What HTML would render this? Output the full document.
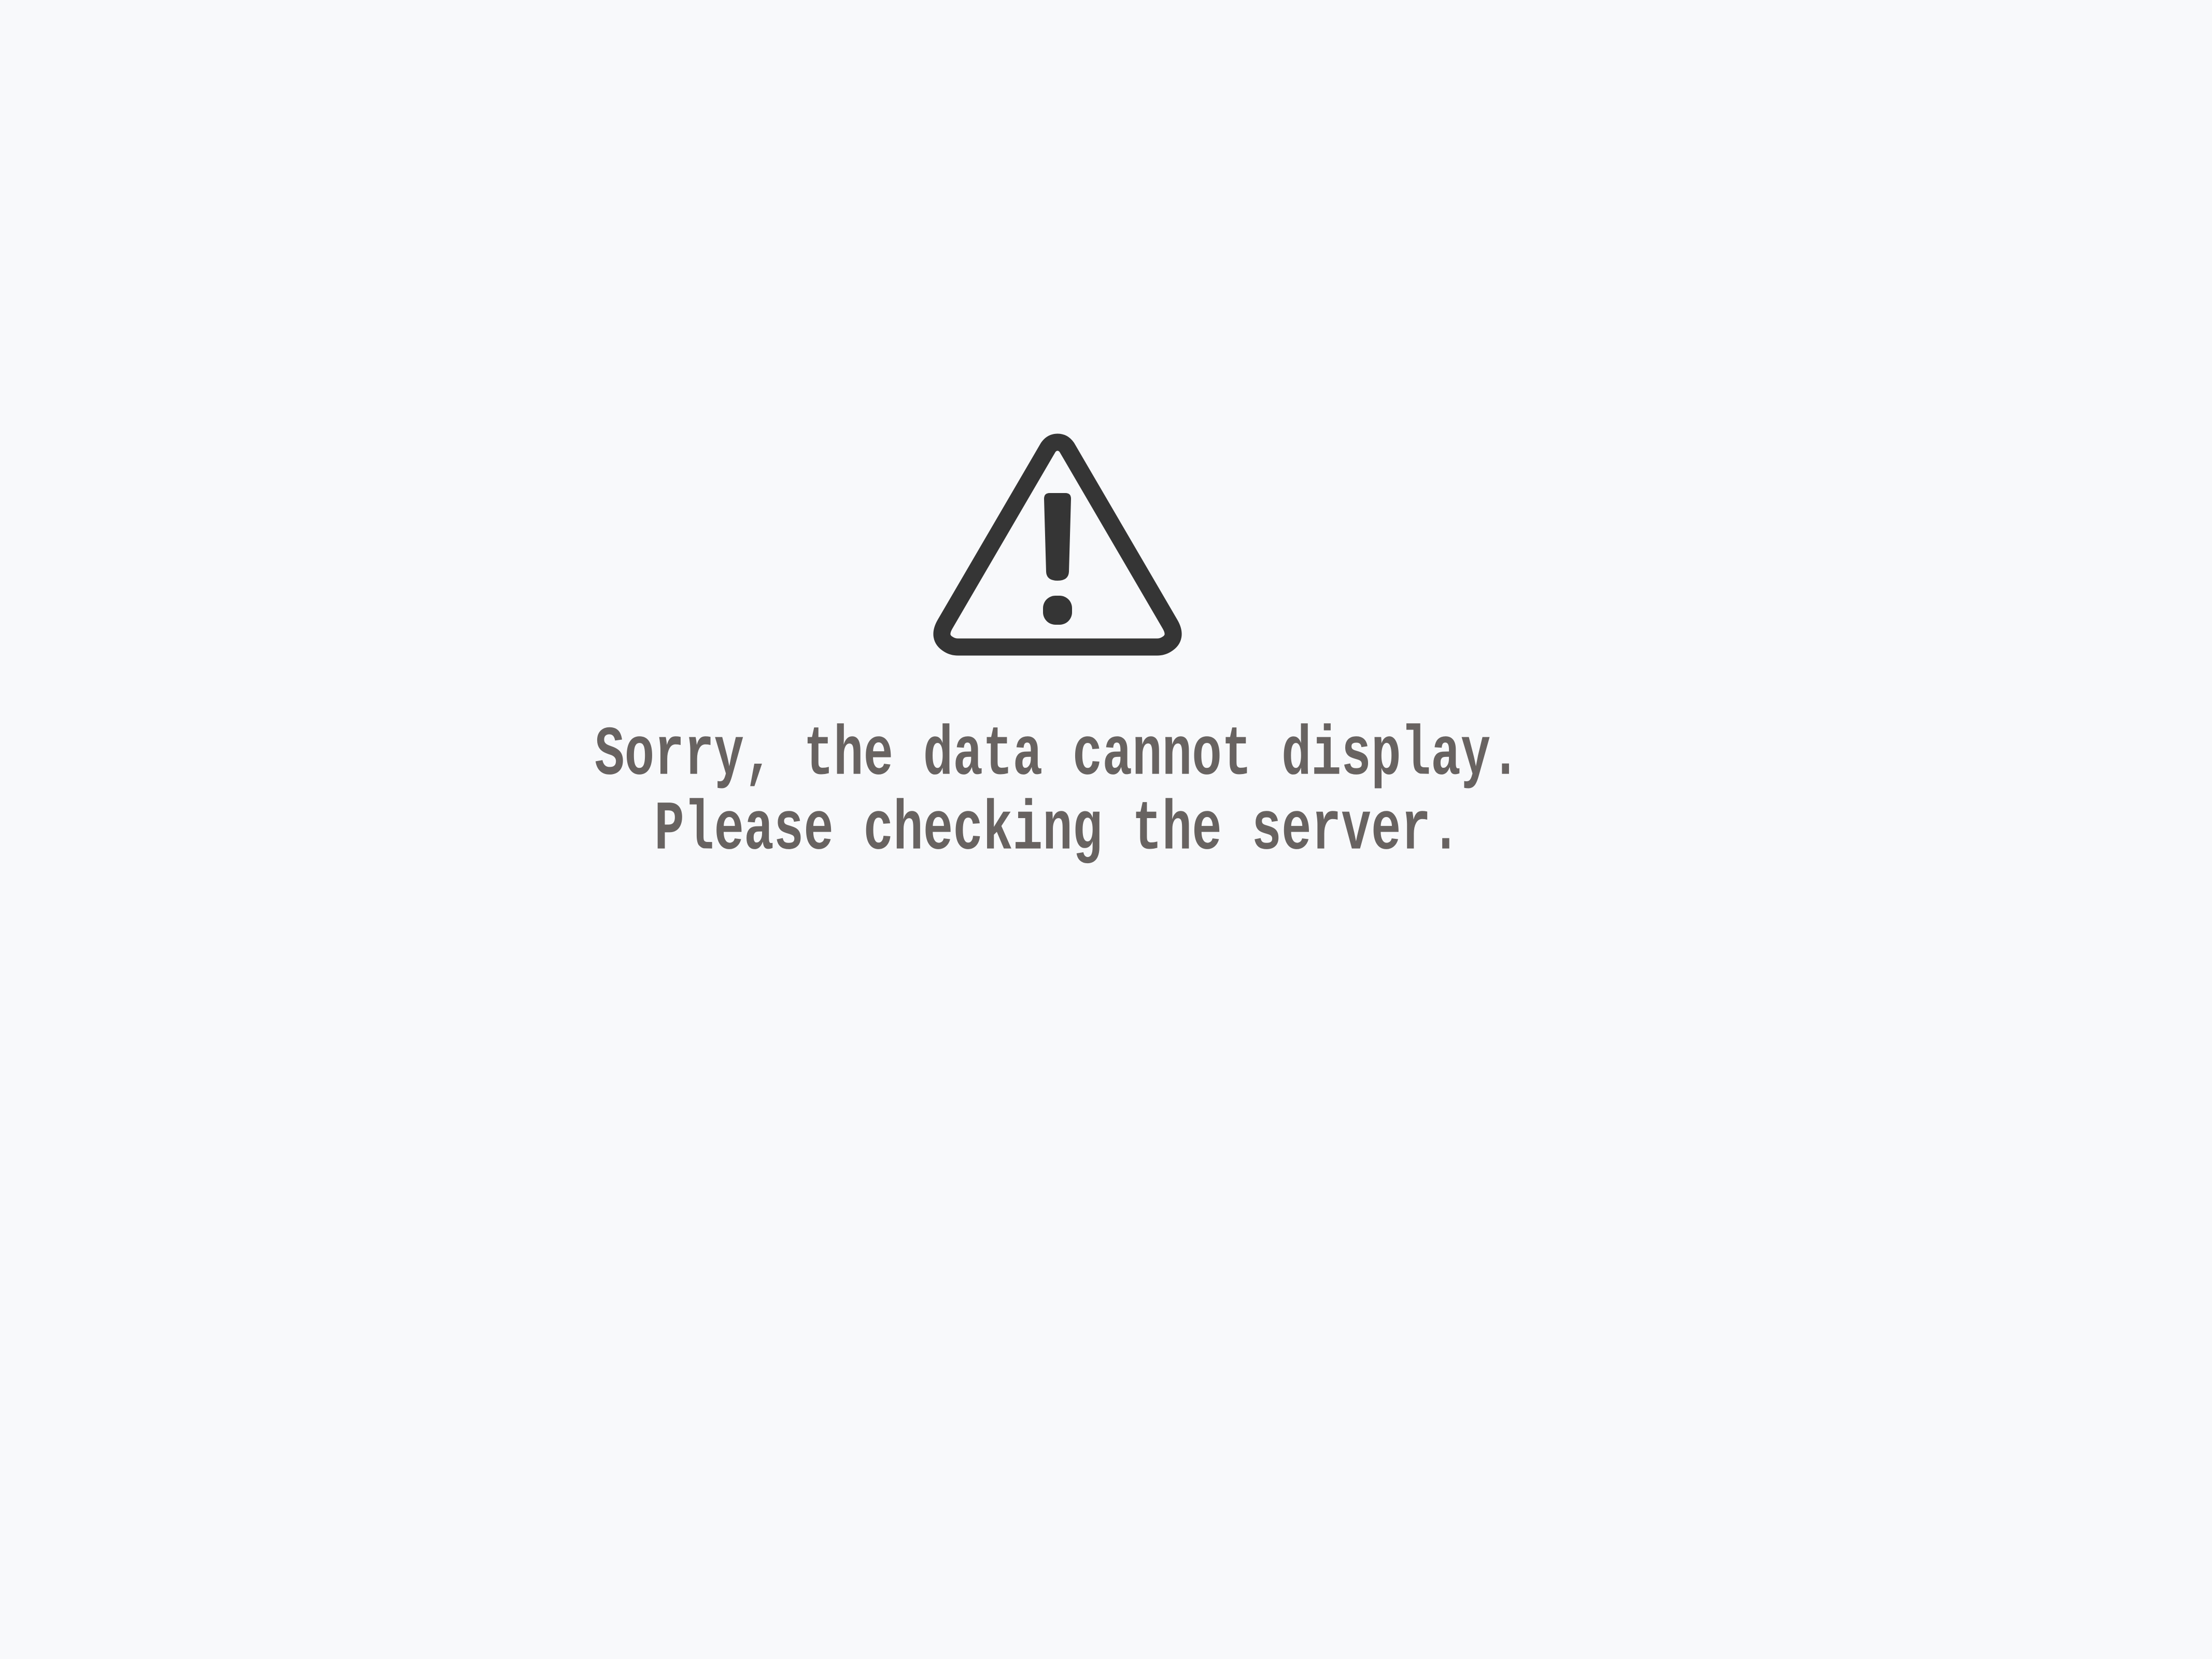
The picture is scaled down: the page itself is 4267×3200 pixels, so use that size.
<!DOCTYPE html>
<html><head><meta charset="utf-8"><style>
html,body{margin:0;padding:0;width:4267px;height:3200px;background:#f8f9fb;overflow:hidden;position:relative}
.t{position:absolute;left:0;width:4080px;text-align:center;font-family:"Liberation Mono",monospace;font-weight:bold;font-size:96px;line-height:100px;height:100px;color:#686361;white-space:pre;transform:scaleY(1.4);transform-origin:50% 76px}
</style></head><body>
<svg style="position:absolute;left:0;top:0" width="4267" height="3200">
<path d="M2040 853 Q2029 853 2022 863 L1823 1204 Q1808 1230 1830 1243 Q1838 1248 1848 1248 L2232 1248 Q2242 1248 2250 1243 Q2272 1230 2257 1204 L2058 863 Q2051 853 2040 853 Z" fill="none" stroke="#353535" stroke-width="33" stroke-linejoin="round"/>
<path d="M2025 951 L2055 951 Q2066 951 2066 962 L2062 1103 Q2061 1120 2040 1120 Q2019 1120 2018 1103 L2014 962 Q2014 951 2025 951 Z" fill="#353535"/>
<rect x="2012" y="1149" width="56" height="56" rx="24" fill="#353535"/>
</svg>
<div class="t" style="top:1418px">Sorry, the data cannot display.</div>
<div class="t" style="top:1562px">Please checking the server.</div>
</body></html>
